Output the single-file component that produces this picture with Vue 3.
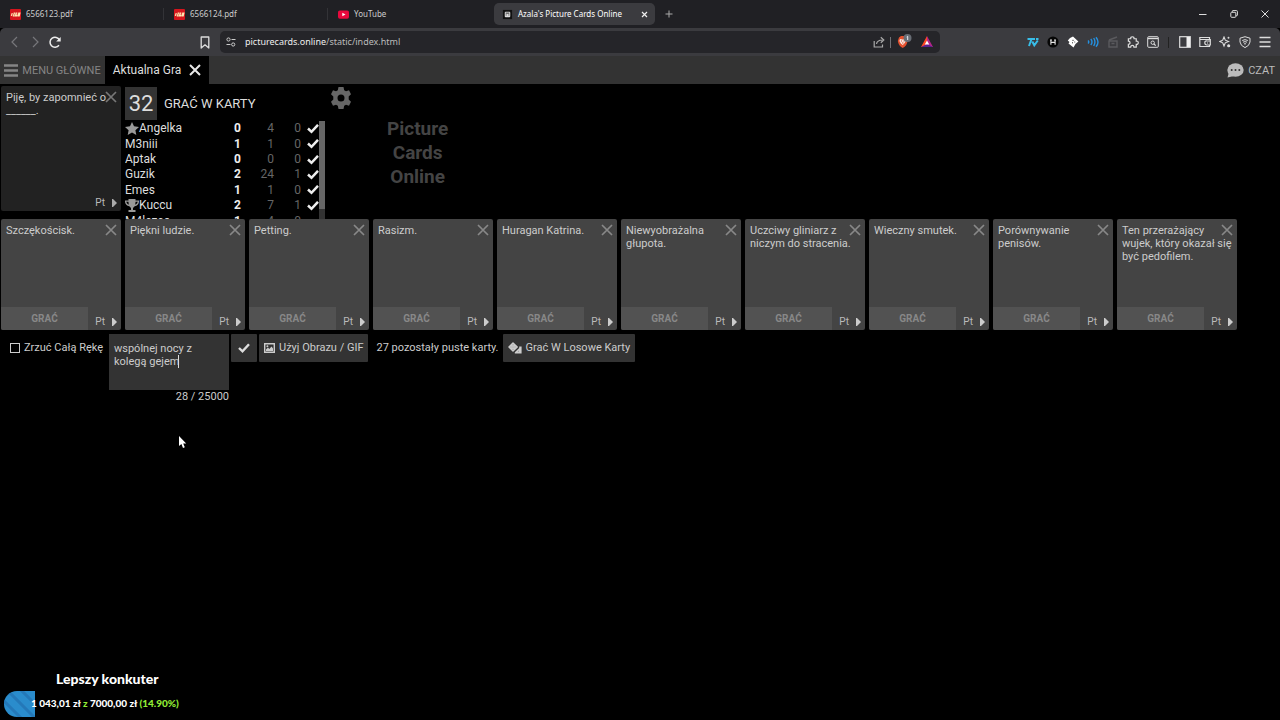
<script setup>
import { ref } from 'vue'

const pdfTabs = ['6566123.pdf', '6566124.pdf']

const players = [
  { name: 'Angelka', icon: 'star', score: 0, a: 4, b: 0, done: true },
  { name: 'M3niii', icon: '', score: 1, a: 1, b: 0, done: true },
  { name: 'Aptak', icon: '', score: 0, a: 0, b: 0, done: true },
  { name: 'Guzik', icon: '', score: 2, a: 24, b: 1, done: true },
  { name: 'Emes', icon: '', score: 1, a: 1, b: 0, done: true },
  { name: 'Kuccu', icon: 'cup', score: 2, a: 7, b: 1, done: true },
  { name: 'M4lezec', icon: '', score: 1, a: 4, b: 0, done: false }
]

const hand = [
  'Szczękościsk.',
  'Piękni ludzie.',
  'Petting.',
  'Rasizm.',
  'Huragan Katrina.',
  'Niewyobrażalna\ngłupota.',
  'Uczciwy gliniarz z\nniczym do stracenia.',
  'Wieczny smutek.',
  'Porównywanie\npenisów.',
  'Ten przerażający\nwujek, który okazał się\nbyć pedofilem.'
]

const answer = ref('wspólnej nocy z\nkolegą gejem')
const dropHand = ref(false)
</script>

<template>
  <div class="screen">
    <header class="tabs">
      <div v-for="t in pdfTabs" :key="t" class="tab">
        <svg class="fav" viewBox="0 0 12 12"><rect width="12" height="12" rx="1" fill="#d5151d" /><path d="M1.5 7.5 2.5 4.5M4 4.5H5.5M3.5 6H5M3 7.5H5M8 4.5H6.7L6 7.5H7.3L7.7 6M9 7.5 9.6 4.5H10.7L10 7.5Z" stroke="#ffe7b0" stroke-width="1.4" fill="none" /></svg>
        <span>{{ t }}</span>
      </div>
      <div class="tab plain">
        <svg class="fav" viewBox="0 0 12 12"><rect y="1.5" width="12" height="9" rx="2" fill="#e8093d" /><path d="M4.7 4 8.2 6 4.7 8Z" fill="#fff" /></svg>
        <span>YouTube</span>
      </div>
      <div class="tab active">
        <svg class="fav" viewBox="0 0 12 12"><rect x="1" y="1" width="10" height="10" fill="#111" /><rect x="3" y="3" width="6" height="6" rx="1" fill="#ddd" /><path d="M4 4.5H8M4.5 6V7M7.5 6V7" stroke="#222" /></svg>
        <span>Azala's Picture Cards Online</span>
        <button class="bare tab-close" aria-label="Zamknij kartę"><svg width="7" height="7" viewBox="0 0 7 7"><path d="M1 1 6 6M6 1 1 6" stroke="#eee" stroke-width="1.2" /></svg></button>
      </div>
      <button class="bare new-tab" aria-label="Nowa karta"><svg width="8" height="8" viewBox="0 0 8 8"><path d="M4 .5V7.5M.5 4H7.5" stroke="#aaa" /></svg></button>
      <div class="window-buttons">
        <button class="bare" aria-label="Minimalizuj"><svg width="8" height="8" viewBox="0 0 8 8"><path d="M0 4.5H7.5" stroke="#ddd" /></svg></button>
        <button class="bare" aria-label="Przywróć"><svg width="8" height="8" viewBox="0 0 8 8"><path d="M2.3 2V1.2Q2.3.6 3 .6H6.5Q7.4.6 7.4 1.5V5Q7.4 5.7 6.7 5.7H6" stroke="#ddd" fill="none" /><rect x=".8" y="2.3" width="5" height="5" rx=".8" stroke="#ddd" fill="none" /></svg></button>
        <button class="bare" aria-label="Zamknij"><svg width="8" height="8" viewBox="0 0 8 8"><path d="M.5.5 7.5 7.5M7.5.5.5 7.5" stroke="#ddd" /></svg></button>
      </div>
    </header>

    <div class="toolbar">
      <div class="history">
        <button class="bare" aria-label="Wstecz"><svg width="14" height="14" viewBox="0 0 14 14"><path d="M9 2 4 7 9 12" stroke="#77777b" stroke-width="1.2" fill="none" /></svg></button>
        <button class="bare" aria-label="Dalej"><svg width="14" height="14" viewBox="0 0 14 14"><path d="M5 2 10 7 5 12" stroke="#77777b" stroke-width="1.2" fill="none" /></svg></button>
        <button class="bare" aria-label="Odśwież"><svg width="14" height="14" viewBox="0 0 14 14"><path d="M11 10.3A5 5 0 1 1 11.5 5" stroke="#eee" stroke-width="1.5" fill="none" /><path d="M12.7 2V6.6H8.2Z" fill="#eee" /></svg></button>
      </div>
      <button class="bare bookmark" aria-label="Dodaj zakładkę"><svg width="10" height="13" viewBox="0 0 10 13"><path d="M1.2 1H8.8V12L5 8.8 1.2 12Z" stroke="#ddd" stroke-width="1.3" fill="none" stroke-linejoin="round" /></svg></button>
      <div class="address">
        <svg width="10" height="10" viewBox="0 0 10 10" fill="none" stroke="#ccc"><circle cx="2.5" cy="2.5" r="1.6" /><path d="M5.5 2.5H9.5M.5 7.5H4.5" /><circle cx="7.2" cy="7.5" r="1.6" /></svg>
        <span class="url"><b>picturecards.online</b>/static/index.html</span>
        <button class="bare" aria-label="Udostępnij"><svg width="12" height="12" viewBox="0 0 12 12" fill="none" stroke="#aaa" stroke-width="1.2"><path d="M1.2 5V11H9.5V8.5M3.5 8Q4 4.2 9.5 4M7.8 1.3 10.8 4 7.8 6.7" /></svg></button>
        <i class="divider"></i>
        <button class="bare" aria-label="Tarcza"><svg width="16" height="16" viewBox="0 0 16 16"><path d="M3 3.5 5 2H8L11 4 11.5 7Q11 12 6.7 14 2.5 12 1.8 7Z" fill="#e5512f" /><path d="M4 5 6.7 5.5 9.2 5 10 7 8.3 9.5 6.7 11 4.8 9.5 3.4 7Z" fill="#f5e9e4" /><path d="M5 7H6M7.5 7H8.5M6 9H7.5" stroke="#e5512f" /><circle cx="11.5" cy="4" r="4" fill="#686d75" /><path d="M10.7 3 11.7 2.3V6" stroke="#e7edf5" fill="none" /></svg></button>
        <button class="bare" aria-label="Nagrody"><svg width="12" height="12" viewBox="0 0 12 12"><path d="M6 0 0 11H6V5Z" fill="#ff4724" /><path d="M6 0 12 11H6V5Z" fill="#b4248a" /><path d="M0 11 6 8 12 11Z" fill="#57218d" /><path d="M6 4.5 3.8 8.5H8.2Z" fill="#fff" /></svg></button>
      </div>
      <div class="extensions">
        <button class="bare" aria-label="7TV"><svg width="12" height="12" viewBox="0 0 12 12" fill="none" stroke="#38bde8" stroke-width="2"><path d="M.5 3H4.5L2 10M8 3H5.5M5.3 5.5 7.3 9.3 10.8 4.5M9 3H11.5" /></svg></button>
        <button class="bare" aria-label="Rozszerzenie"><svg width="12" height="12" viewBox="0 0 12 12"><circle cx="6" cy="6" r="5.6" fill="#060606" /><path d="M3.9 3.5V8.7M8.1 3.5V8.7M4 6.4H8M3 4H5M7 4H9" stroke="#e5e5e5" stroke-width="1.1" /></svg></button>
        <button class="bare" aria-label="Rozszerzenie"><svg width="12" height="12" viewBox="0 0 12 12"><path d="M6 .5 11.4 5.5 8.5 8 6.5 11.5 1.5 7.5 2.5 6 .8 4.5 3 2Z" fill="#fff" /><path d="M6 3.8V5M5 6.8H6M7.4 6H8.2" stroke="#333" /></svg></button>
        <button class="bare" aria-label="Dźwięk"><svg width="12" height="12" viewBox="0 0 12 12" fill="none" stroke="#2590df" stroke-width="1.4"><path d="M1 4.5Q2.5 6 1 7.5M3.8 3Q6.2 6 3.8 9M6.7 2Q9.2 6 6.7 10M9 1.2Q13 6 9 10.8" /></svg></button>
        <button class="bare" aria-label="Klaps"><svg width="12" height="12" viewBox="0 0 12 12" fill="none" stroke="#5a5a5e" stroke-width="1.4"><path d="M2 5H10V11H2ZM2 4 10 1M4.5 7.5H7.5" /></svg></button>
        <button class="bare" aria-label="Rozszerzenia"><svg width="12" height="12" viewBox="0 0 13 13" fill="none" stroke="#ddd" stroke-width="1.3"><path d="M1.5 3H4Q3.8.8 5.8.8T7.6 3H10V5.5Q12.2 5.3 12.2 7.2T10 9V12H7.5Q7.5 10.2 5.8 10.2T4 12H1.5V9Q3.3 9 3.3 7.3T1.5 5.6Z" /></svg></button>
        <button class="bare" aria-label="Szukaj"><svg width="12" height="12" viewBox="0 0 12 12" fill="none" stroke="#ddd"><rect x=".7" y=".7" width="10.6" height="10.6" rx="1" /><path d="M1 2.5H11" stroke-width="1.4" /><path d="M7 8 8.7 9.7" stroke-width="1.2" /><circle cx="5.7" cy="6.7" r="1.7" /></svg></button>
        <i class="divider dark"></i>
        <button class="bare" aria-label="Panel boczny"><svg width="12" height="12" viewBox="0 0 12 12"><rect x=".7" y=".7" width="10.6" height="10.6" stroke="#ddd" fill="none" stroke-width="1.2" /><path d="M7.5 1H11V11H7.5Z" fill="#eee" /></svg></button>
        <button class="bare" aria-label="Portfel"><svg width="12" height="12" viewBox="0 0 12 12" fill="none" stroke="#ddd" stroke-width="1.2"><path d="M10.5 4V1.5H.8V10.5H10.5V9M1 3.5H11.3V9H8Q5.8 9 5.8 6.8T8 5H11M8 7H9" /></svg></button>
        <button class="bare" aria-label="Leo"><svg width="12" height="12" viewBox="0 0 12 12" fill="none" stroke="#ddd" stroke-width="1.1"><path d="M5 1 6.3 4.2 9.5 5.5 6.3 6.8 5 10 3.7 6.8.8 5.5 3.7 4.2Z" /><circle cx="9.7" cy="9.7" r="1" fill="#ddd" /><circle cx="9.5" cy="1.8" r=".4" /></svg></button>
        <button class="bare" aria-label="VPN"><svg width="12" height="12" viewBox="0 0 12 12" fill="none" stroke="#ddd"><path d="M6 .7 11 2.2V6Q10.5 9.8 6 11.6 1.5 9.8 1 6V2.2ZM3.2 4.5Q6 2.8 8.8 4.5M4 6.2Q6 5 8 6.2M5 8Q6 7.3 7 8" /></svg></button>
        <button class="bare" aria-label="Menu"><svg width="12" height="12" viewBox="0 0 12 12"><path d="M.5 1.5H11.5M.5 6H11.5M.5 10.5H11.5" stroke="#ddd" stroke-width="1.3" /></svg></button>
      </div>
    </div>

    <nav class="game-nav">
      <button class="bare main-menu"><svg width="14" height="13" viewBox="0 0 14 13"><path d="M0 1.5H14M0 6.5H14M0 11.5H14" stroke="#858585" stroke-width="2.4" /></svg>MENU GŁÓWNE</button>
      <div class="game-tab">Aktualna Gra
        <button class="bare" aria-label="Zamknij grę"><svg width="12" height="12" viewBox="0 0 12 12"><path d="M1 1 11 11M11 1 1 11" stroke="#e8e8e8" stroke-width="2" /></svg></button>
      </div>
      <button class="bare chat"><svg width="17" height="15" viewBox="0 0 17 15"><ellipse cx="8.5" cy="7" rx="8.2" ry="6.7" fill="#bbb" /><path d="M2 9 .5 14.5 7 13Z" fill="#bbb" /><circle cx="4.7" cy="7" r="1" fill="#333" /><circle cx="8.5" cy="7" r="1" fill="#333" /><circle cx="12.3" cy="7" r="1" fill="#333" /></svg>CZAT</button>
    </nav>

    <main>
      <section class="top">
        <article class="card black">
          <p>Piję, by zapomnieć o
______.</p>
          <button class="bare card-close" aria-label="Odrzuć"><svg width="12" height="12" viewBox="0 0 12 12"><path d="M1 1 11 11M11 1 1 11" stroke="#777" stroke-width="1.7" /></svg></button>
          <footer><span></span><button class="bare lang">Pt <svg width="5" height="8" viewBox="0 0 5 8"><path d="M0 0H1L5 4 1 8H0Z" fill="#aaa" /></svg></button></footer>
        </article>

        <div class="board">
          <div class="status"><strong>32</strong><span>GRAĆ W KARTY</span></div>
          <div class="scroll">
            <table>
              <tbody>
                <tr v-for="p in players" :key="p.name">
                  <td class="name">
                    <div>
                      <svg v-if="p.icon === 'star'" width="14" height="13" viewBox="0 0 14 13"><path d="M7 0 9 4.3 14 4.9 10.4 8.2 11.3 13 7 10.6 2.7 13 3.6 8.2 0 4.9 5 4.3Z" fill="#999" /></svg>
                      <svg v-if="p.icon === 'cup'" width="14" height="13" viewBox="0 0 14 13"><path d="M3.5 0H10.5V1.5H14V3Q13.5 6.5 9.7 7.2L8 9V11H10.5V13H3.5V11H6V9L4.3 7.2Q.5 6.5 0 3V1.5H3.5ZM1.2 2.8Q1.7 5 3.8 5.8L3.4 2.8ZM12.8 2.8H10.6L10.2 5.8Q12.3 5 12.8 2.8Z" fill="#999" fill-rule="evenodd" /></svg>
                      {{ p.name }}
                    </div>
                  </td>
                  <td class="score">{{ p.score }}</td>
                  <td class="minor">{{ p.a }}</td>
                  <td class="minor last">{{ p.b }}</td>
                  <td class="tick"><svg v-if="p.done" width="12" height="10" viewBox="0 0 12 10"><path d="M1 4.5 4.5 7.8 11 .8" stroke="#eee" stroke-width="2.5" fill="none" /></svg></td>
                </tr>
              </tbody>
            </table>
            <i class="track"></i>
          </div>
        </div>

        <button class="bare gear" aria-label="Ustawienia"><svg width="20" height="22" viewBox="0 0 20 22"><path d="M7.5 0H12.5L13.2 3.2 15 4.2 18 3.2 20 7.2 17.7 9.5V12.5L20 14.8 18 18.8 15 17.8 13.2 18.8 12.5 22H7.5L6.8 18.8 5 17.8 2 18.8 0 14.8 2.3 12.5V9.5L0 7.2 2 3.2 5 4.2 6.8 3.2ZM10 7.5A3.5 3.5 0 1 0 10 14.5 3.5 3.5 0 1 0 10 7.5Z" fill="#666" fill-rule="evenodd" /></svg></button>
        <h1>Picture<br>Cards<br>Online</h1>
      </section>

      <section class="hand">
        <article v-for="c in hand" :key="c" class="card">
          <p>{{ c }}</p>
          <button class="bare card-close" aria-label="Odrzuć"><svg width="12" height="12" viewBox="0 0 12 12"><path d="M1 1 11 11M11 1 1 11" stroke="#888" stroke-width="1.7" /></svg></button>
          <footer>
            <button class="bare play">GRAĆ</button>
            <button class="bare lang">Pt <svg width="5" height="8" viewBox="0 0 5 8"><path d="M0 0H1L5 4 1 8H0Z" fill="#ccc" /></svg></button>
          </footer>
        </article>
      </section>

      <section class="actions">
        <label class="drop"><input v-model="dropHand" type="checkbox">Zrzuć Całą Rękę</label>
        <div class="answer">
          <textarea v-model="answer" aria-label="Pusta karta"></textarea>
          <i class="caret"></i>
          <span>28 / 25000</span>
        </div>
        <button class="bare act confirm" aria-label="Zatwierdź"><svg width="12" height="10" viewBox="0 0 12 10"><path d="M1 5 4.5 8.3 11 1.3" stroke="#ddd" stroke-width="2.4" fill="none" /></svg></button>
        <button class="bare act"><svg width="11" height="10" viewBox="0 0 11 10"><path d="M0 0H11V10H0ZM1.4 1.4V8.6H9.6V1.4Z" fill="#ccc" fill-rule="evenodd" /><path d="M2 8V6.5L4 4.5 5.3 6 7.5 3.5 9 5.5V8Z" fill="#ccc" /><circle cx="3.4" cy="3.2" r="1" fill="#ccc" /></svg>Użyj Obrazu / GIF</button>
        <span class="left">27 pozostały puste karty.</span>
        <button class="bare act random"><svg width="14" height="12" viewBox="0 0 14 12"><path d="M5 1 9.2 5 5 9 1 5Z" fill="#ccc" stroke="#ccc" stroke-width="1.5" stroke-linejoin="round" /><path d="M11.2 4.5H13.6V11.6H6.8V10.3L11.2 6Z" fill="#ccc" /><path d="M5 2.5V3.2M5 4.7V5.4M5 6.9V7.6M2.7 5H3.3M6.7 5H7.3M10.3 9.3H11" stroke="#777" stroke-width=".8" /></svg>Grać W Losowe Karty</button>
      </section>
    </main>

    <aside class="goal">
      <div class="goal-title">Lepszy konkuter</div>
      <div class="goal-row">
        <svg width="31" height="26" viewBox="0 0 31 26"><defs><clipPath id="pill"><path d="M13 0H31V26H13A13 13 0 0 1 13 0Z" /></clipPath></defs><g clip-path="url(#pill)"><rect width="31" height="26" fill="#2a8ccc" /><path d="M-6 4 20 30M0-4 34 30M10-8 44 26" stroke="#2478b8" stroke-width="3" /></g></svg>
        <div class="goal-text">1 043,01 zł <em>z</em> 7000,00 zł <em>(14.90%)</em></div>
      </div>
    </aside>

    <svg class="cursor" width="9" height="14" viewBox="0 0 9 14"><path d="M1 1V11L3.4 9 5 13 6.8 12.2 5.2 8.5H8.2Z" fill="#fff" /></svg>
  </div>
</template>

<style>
html, body { margin: 0; background: #000; }
</style>

<style scoped>
.screen { position: relative; min-height: 100vh; background: #000; color: #ccc; font: 11px/13px Roboto, "Liberation Sans", sans-serif; overflow: hidden; }
.screen * { box-sizing: border-box; }
svg { display: block; flex: none; }
.bare { display: flex; align-items: center; justify-content: center; border: 0; padding: 0; margin: 0; background: none; color: inherit; font: inherit; }

.tabs { display: flex; align-items: center; height: 28px; background: #202024; color: #ccc; font: 8px/12px "Noto Sans", "Open Sans", sans-serif; }
.tab { display: flex; align-items: center; gap: 5px; width: 164px; height: 22px; padding-left: 10px; white-space: nowrap; }
.tab:not(.active):not(.plain) { background: linear-gradient(#333337, #333337) right center / 1px 12px no-repeat; }
.tab.plain { width: 166px; }
.tab.active { width: 161px; padding: 0 6px 0 8px; border-radius: 5px; background: #3b3b3f; color: #fff; }
.fav { width: 11px; height: 11px; }
.tab-close { margin-left: auto; width: 10px; height: 10px; }
.new-tab { width: 16px; height: 16px; margin-left: 6px; }
.window-buttons { display: flex; gap: 15px; margin-left: auto; padding-right: 7px; }
.window-buttons .bare { width: 16px; height: 16px; }

.toolbar { display: flex; align-items: center; height: 28px; padding: 0 9px 0 8px; border-radius: 5px 5px 0 0; background: #3b3b3f; }
.history { display: flex; gap: 6px; }
.bookmark { margin-left: 138px; }
.address { display: flex; align-items: center; width: 720px; height: 22px; margin-left: 10px; padding: 0 7px 0 6px; gap: 9px; border-radius: 5px; background: #252529; color: #aaa; font: 9px/12px "Noto Sans", "Open Sans", sans-serif; }
.url { flex: 1; color: #bbb; }
.url b { font-weight: 400; color: #eee; }
.address .divider { margin: 0 -4px; }
.divider { width: 1px; height: 11px; background: #707075; }
.divider.dark { background: #222; }
.extensions { display: flex; align-items: center; gap: 8px; margin-left: auto; }
.extensions .divider { margin: 0 2px 0 1px; }

.game-nav { display: flex; align-items: stretch; height: 28px; background: #333; font-size: 12px; }
.main-menu { width: 105px; color: #858585; gap: 4px; font-size: 11px; }
.game-tab { display: flex; align-items: center; justify-content: center; gap: 8px; width: 104px; background: #000; color: #ddd; }
.chat { gap: 4px; margin-left: auto; padding-right: 5px; color: #bbb; font-size: 11px; }

main { padding: 2px 1px 0; }
.top { display: flex; align-items: flex-start; height: 133px; overflow: hidden; }
.card { position: relative; display: flex; flex-direction: column; justify-content: space-between; width: 120px; height: 111px; border-radius: 2px; background: #444; color: #ccc; overflow: hidden; }
.card.black { height: 125px; background: #222; }
.card p { margin: 0; padding: 5px; white-space: pre-line; }
.card-close { position: absolute; top: 5px; right: 4px; width: 12px; height: 12px; }
.card footer { display: flex; justify-content: space-between; align-items: flex-end; height: 23px; }
.play { width: 87px; height: 23px; background: #525252; color: #888; font-weight: 700; font-size: 10px; }
.lang { gap: 7px; height: 17px; padding-right: 4px; font-size: 10px; color: #bbb; }

.board { width: 200px; margin-left: 4px; }
.status { display: flex; align-items: center; gap: 7px; height: 35px; font-size: 13px; color: #ddd; }
.status strong { display: grid; place-items: center; width: 32px; height: 33px; background: #333; font-weight: 400; font-size: 22px; }
.scroll { display: flex; height: 98px; overflow: hidden; }
table { flex: 1; height: 108px; border-collapse: collapse; table-layout: fixed; font-size: 12px; line-height: 15px; }
td { padding: 0; vertical-align: middle; }
.name { width: 96px; color: #ddd; }
.name div { display: flex; align-items: center; }
.score { width: 20px; text-align: right; font-weight: 700; color: #eee; }
.minor { width: 33px; text-align: right; color: #666; }
.minor.last { width: 27px; }
.tick { padding-left: 6px; }
.track { width: 6px; height: 98px; background: linear-gradient(#666 90%, #333 90%); }
.gear { width: 20px; margin: 1px 0 0 6px; }
h1 { margin: 31px 0 0 36px; text-align: center; font-size: 19px; line-height: 24px; color: #444; font-weight: 700; }

.hand { display: flex; gap: 4px; }
.actions { display: flex; align-items: flex-start; padding-top: 4px; line-height: 28px; }
.drop { display: flex; align-items: center; gap: 4px; width: 108px; padding-left: 9px; }
.drop input { appearance: none; width: 10px; height: 10px; margin: 0; border: 1px solid #ccc; background: #000; }
.answer { position: relative; width: 120px; text-align: right; line-height: 14px; }
.answer textarea { display: block; width: 120px; height: 56px; border: 0; margin: 0; padding: 8px 5px; resize: none; outline: 0; background: #333; color: #ccc; font: inherit; line-height: 13px; overflow: hidden; }
.caret { position: absolute; left: 69px; top: 21px; width: 1px; height: 13px; background: #ddd; }
.act { height: 28px; padding: 0 5px; gap: 4px; background: #333; color: #ccc; border-radius: 1px; margin-left: 2px; }
.confirm { width: 26px; }
.left { margin: 0 4px 0 8px; }
.act.random { margin-left: 0; }

.goal { position: absolute; left: 4px; bottom: 3px; color: #fff; font: 900 10px/24px Lato, sans-serif; }
.goal-title { padding-left: 52px; font-size: 14px; }
.goal-row { display: flex; }
.goal-text { margin-left: -4px; white-space: nowrap; }
.goal em { font-style: normal; color: #92ed35; }
.cursor { position: absolute; left: 178px; top: 435px; }
</style>
